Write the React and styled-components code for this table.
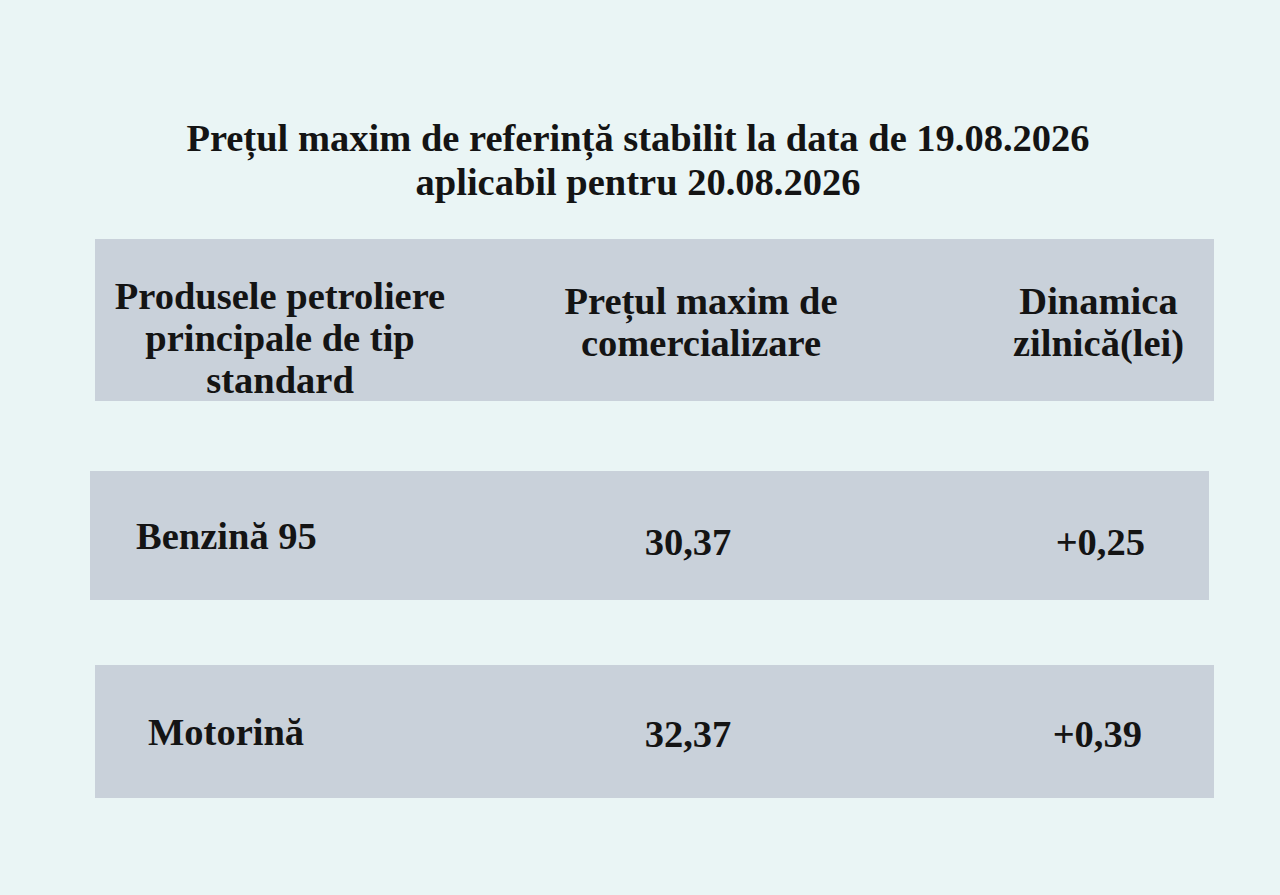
import React from 'react';
import styled, { createGlobalStyle } from 'styled-components';

const GlobalStyle = createGlobalStyle`
  html, body {
    margin: 0;
    padding: 0;
    background-color: #eaf5f5;
  }
  body {
    font-family: "Liberation Serif", "Times New Roman", serif;
    color: #141414;
  }
`;

const Page = styled.div`
  width: 1280px;
  height: 895px;
  overflow: hidden;
  background-color: #eaf5f5;
  padding-top: 116px;
  box-sizing: border-box;
`;

const Title = styled.h1`
  margin: 0;
  text-align: center;
  font-size: 38.5px;
  line-height: 44px;
  font-weight: bold;
  padding-right: 4px;
`;

const HeaderBar = styled.div`
  display: grid;
  grid-template-columns: 370px 472px 277px;
  width: 1119px;
  height: 162px;
  margin: 35px 0 0 95px;
  background-color: #c9d1da;
  box-sizing: border-box;
  padding-top: 36px;
`;

const HeadCell = styled.div`
  text-align: center;
  font-size: 38.5px;
  line-height: 42px;
  font-weight: bold;
  margin-top: ${p => p.$drop || 0}px;
  padding-left: ${p => p.$indent || 0}px;
`;

const Row = styled.div`
  display: grid;
  grid-template-columns: ${p => p.$first}px 290px 1fr;
  align-items: center;
  width: 1119px;
  height: ${p => p.$height}px;
  margin: ${p => p.$gap}px 0 0 ${p => p.$left}px;
  background-color: #c9d1da;
  font-size: 38.5px;
  font-weight: bold;
`;

const Name = styled.div`
  padding-left: ${p => p.$indent}px;
`;

const Value = styled.div`
  text-align: center;
  padding-top: ${p => p.$drop || 0}px;
`;

const Change = styled.div`
  justify-self: end;
  padding-right: ${p => p.$right}px;
  padding-top: ${p => p.$drop || 0}px;
`;

const rows = [
  { name: 'Benzină 95', price: '30,37', change: '+0,25', left: 90, first: 453, gap: 70, height: 129, indent: 46, right: 64, drop: 12 },
  { name: 'Motorină', price: '32,37', change: '+0,39', left: 95, first: 448, gap: 65, height: 133, indent: 53, right: 72, drop: 4 }
];

export default function App() {
  return (
    <Page>
      <GlobalStyle />
      <Title>
        Prețul maxim de referință stabilit la data de 19.08.2026
        <br />
        aplicabil pentru 20.08.2026
      </Title>
      <HeaderBar>
        <HeadCell>Produsele petroliere principale de tip standard</HeadCell>
        <HeadCell $drop={5}>Prețul maxim de comercializare</HeadCell>
        <HeadCell $drop={5} $indent={46}>Dinamica<br />zilnică(lei)</HeadCell>
      </HeaderBar>
      {rows.map(row => (
        <Row key={row.name} $left={row.left} $first={row.first} $gap={row.gap} $height={row.height}>
          <Name $indent={row.indent}>{row.name}</Name>
          <Value $drop={row.drop}>{row.price}</Value>
          <Change $right={row.right} $drop={row.drop}>{row.change}</Change>
        </Row>
      ))}
    </Page>
  );
}
